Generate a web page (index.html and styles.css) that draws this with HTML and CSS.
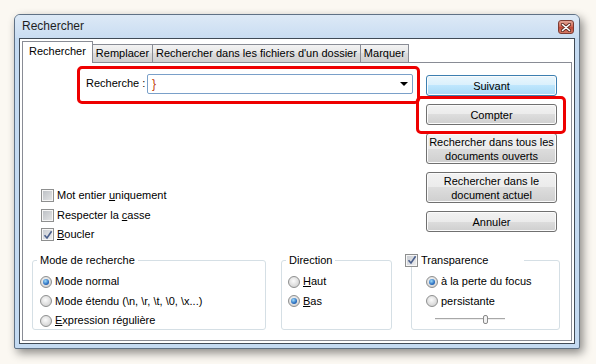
FILE: index.html
```html
<!DOCTYPE html>
<html lang="fr">
<head>
    <meta charset="UTF-8">
    <meta name="viewport" content="width=device-width, initial-scale=1.0">
    <title>Rechercher</title>
    <link rel="stylesheet" href="styles.css">
</head>
<body>
<div class="desk">
    <div class="window">
        <div class="titlebar">
            <span class="title">Rechercher</span>
            <span class="close">
                <svg width="10" height="9" viewBox="0 0 10 9">
                    <path d="M1.5 1.5 L8.5 7.5 M8.5 1.5 L1.5 7.5" stroke="#5a2a22" stroke-width="3.2" stroke-linecap="round"/>
                    <path d="M1.5 1.5 L8.5 7.5 M8.5 1.5 L1.5 7.5" stroke="#fff" stroke-width="1.6" stroke-linecap="round"/>
                </svg>
            </span>
        </div>
        <div class="client">
            <div class="tabs">
                <div class="tab active">Rechercher</div>
                <div class="tab">Remplacer</div>
                <div class="tab">Rechercher dans les fichiers d'un dossier</div>
                <div class="tab">Marquer</div>
            </div>
            <div class="panel">
                <div class="top">
                    <div class="left">
                        <div class="search mark">
                            <label class="search-label">Recherche :</label>
                            <div class="combo">
                                <span class="combo-val">}</span>
                                <span class="combo-arrow"></span>
                            </div>
                        </div>
                        <div class="checks">
                            <div class="opt"><span class="cb"></span><span>Mot entier <u>u</u>niquement</span></div>
                            <div class="opt"><span class="cb"></span><span>Respecter la <u>c</u>asse</span></div>
                            <div class="opt"><span class="cb checked"><svg width="10" height="10" viewBox="0 0 10 10"><path d="M1.5 5.2 L4 8 L8.6 1.2" fill="none" stroke="#4a5f8c" stroke-width="1.6"/></svg></span><span><u>B</u>oucler</span></div>
                        </div>
                    </div>
                    <div class="buttons">
                        <button class="btn default">Suivant</button>
                        <button class="btn mark">Compter</button>
                        <button class="btn tall">Rechercher dans tous les<br>documents ouverts</button>
                        <button class="btn tall">Rechercher dans le<br>document actuel</button>
                        <button class="btn">Annuler</button>
                    </div>
                </div>
                <div class="groups">
                    <fieldset class="group g-mode">
                        <legend>Mode de recherche</legend>
                        <div class="rows">
                            <div class="opt"><span class="rb on"></span><span>Mode normal</span></div>
                            <div class="opt"><span class="rb"></span><span>Mode étendu (\n, \r, \t, \0, \x...)</span></div>
                            <div class="opt"><span class="rb"></span><span><u>E</u>xpression régulière</span></div>
                        </div>
                    </fieldset>
                    <fieldset class="group g-dir">
                        <legend>Direction</legend>
                        <div class="rows">
                            <div class="opt"><span class="rb"></span><span><u>H</u>aut</span></div>
                            <div class="opt"><span class="rb on"></span><span><u>B</u>as</span></div>
                        </div>
                    </fieldset>
                    <fieldset class="group g-trans">
                        <legend><span class="cb checked"><svg width="10" height="10" viewBox="0 0 10 10"><path d="M1.5 5.2 L4 8 L8.6 1.2" fill="none" stroke="#4a5f8c" stroke-width="1.6"/></svg></span>Transparence</legend>
                        <div class="rows">
                            <div class="opt"><span class="rb on"></span><span>à la perte du focus</span></div>
                            <div class="opt"><span class="rb"></span><span>persistante</span></div>
                            <div class="slider">
                                <span class="track"></span>
                                <span class="thumb"></span>
                                <span class="track short"></span>
                            </div>
                        </div>
                    </fieldset>
                </div>
            </div>
        </div>
    </div>
</div>
</body>
</html>
```

FILE: styles.css
```css
html, body {
    margin: 0;
    height: 100%;
}

body {
    background: #fbf8f2;
    font: 11px/1.2 "Liberation Sans", Arial, sans-serif;
    color: #000;
}

.desk {
    padding: 14px 0 0 14px;
}

.window {
    width: 566px;
    height: 335px;
    box-sizing: border-box;
    border: 1px solid #5f7185;
    border-radius: 6px 6px 2px 2px;
    padding: 0 4px 4px;
    background: #c4daf1;
    box-shadow: 3px 4px 10px rgba(0, 0, 0, .45);
    display: flex;
    flex-direction: column;
}

.titlebar {
    height: 23px;
    margin: 0 -4px;
    padding: 0 5px 0 7px;
    display: flex;
    align-items: center;
    justify-content: space-between;
    background: linear-gradient(#dde9f6, #c9ddf2);
    border-radius: 5px 5px 0 0;
}

.title {
    font-size: 12px;
    color: #1e1e1e;
}

.close {
    width: 16px;
    height: 14px;
    box-sizing: border-box;
    border: 1px solid #7d3b33;
    border-radius: 3px;
    background: linear-gradient(#e2a596, #d06a58 45%, #c04a38 55%, #d47a66);
    display: flex;
    align-items: center;
    justify-content: center;
    margin-top: 1px;
}

.client {
    flex: 1;
    border: 1px solid #404b57;
    background: #fff;
    padding: 2px;
    display: flex;
    flex-direction: column;
}

/* onglets */
.tabs {
    display: flex;
    align-items: flex-end;
    height: 21px;
    position: relative;
    z-index: 1;
}

.tab {
    height: 18px;
    box-sizing: border-box;
    padding: 2px 3px 0;
    border: 1px solid #898c95;
    border-bottom: none;
    background: linear-gradient(#f3f3f3, #e6e6e6 50%, #dcdcdc 50%, #cfcfcf);
    margin-left: -1px;
    white-space: nowrap;
}

.tab:first-child {
    margin-left: 0;
}

.tab.active {
    height: 22px;
    margin-bottom: -1px;
    padding: 3px 6px 0;
    background: #fff;
    position: relative;
    z-index: 2;
}

.panel {
    height: 279px;
    box-sizing: border-box;
    border: 1px solid #898c95;
}

.top {
    display: flex;
    height: 190px;
}

.left {
    flex: 1;
}

.mark {
    position: relative;
}

.search {
    display: flex;
    width: fit-content;
    align-items: center;
    margin: 11px 0 0 63px;
}

.search.mark::after {
    content: "";
    position: absolute;
    top: -8px;
    left: -9px;
    right: -7px;
    bottom: -10px;
    border: 3px solid #ee0000;
    border-radius: 5px;
}

.search-label {
    width: 61px;
}

.combo {
    width: 266px;
    height: 20px;
    box-sizing: border-box;
    border: 1px solid #7aa0c9;
    border-radius: 2px;
    display: flex;
    align-items: center;
    justify-content: space-between;
    padding: 0 4px;
}

.combo-val {
    color: #c0400a;
    font-size: 12px;
}

.combo-arrow {
    width: 0;
    height: 0;
    border-left: 4px solid transparent;
    border-right: 4px solid transparent;
    border-top: 4px solid #000;
}

.checks {
    margin: 92px 0 0 18px;
}

.opt {
    display: flex;
    align-items: center;
    height: 19.5px;
    white-space: nowrap;
}

.cb {
    width: 13px;
    height: 13px;
    box-sizing: border-box;
    border: 1px solid #8e8f8f;
    background: linear-gradient(135deg, #b9bdc2, #e6e7e8);
    box-shadow: inset 0 0 0 1px #f6f6f6;
    margin-right: 3px;
    display: inline-flex;
    align-items: center;
    justify-content: center;
    flex: none;
}

.cb.checked {
    background: linear-gradient(135deg, #c6cad0, #f0f0f1);
}

.rb {
    width: 12px;
    height: 12px;
    box-sizing: border-box;
    border: 1px solid #8e8f8f;
    border-radius: 50%;
    background: radial-gradient(circle at 45% 40%, #fbfbfb, #dcdcdc 60%, #c4c4c4);
    margin-right: 3px;
    display: inline-flex;
    align-items: center;
    justify-content: center;
    flex: none;
}

.rb.on::after {
    content: "";
    width: 6px;
    height: 6px;
    border-radius: 50%;
    background: radial-gradient(circle at 40% 35%, #9fdcfb, #2b6fc0 60%, #17468c);
}

/* boutons */
.buttons {
    width: 131px;
    margin: 12px 14px 0 0;
    display: flex;
    flex-direction: column;
    gap: 8px;
}

.btn {
    font: inherit;
    color: #000;
    height: 21px;
    padding: 0;
    border: 1px solid #707070;
    border-radius: 3px;
    background: linear-gradient(#f2f2f2, #ebebeb 50%, #dddddd 50%, #cfcfcf);
    box-shadow: inset 0 0 0 1px #fbfbfb;
    line-height: 14px;
}

.btn.tall {
    height: 31px;
}

.btn.default {
    border-color: #3c7fb1;
    background: linear-gradient(#eaf6fd, #d9f0fc 50%, #bee6fd 50%, #a7d9f5);
}

.btn.mark::after {
    content: "";
    position: absolute;
    top: -9px;
    left: -11px;
    right: -10px;
    bottom: -10px;
    border: 3px solid #ee0000;
    border-radius: 5px;
}

/* cadres */
.groups {
    display: flex;
    padding-left: 9px;
}

.group {
    margin: 0;
    padding: 0;
    min-width: 0;
    height: 77px;
    box-sizing: border-box;
    border: 1px solid #d5dfe5;
    border-radius: 3px;
}

.group legend {
    padding: 0 3px;
    margin-left: 4px;
    line-height: 14px;
}

.g-mode {
    width: 234px;
}

.g-mode .rows {
    padding: 5px 0 0 7px;
}

.g-dir {
    width: 111px;
    margin-left: 15px;
}

.g-dir .rows {
    padding: 5px 0 0 6px;
}

.g-trans {
    width: 149px;
    margin-left: 19px;
}

.g-trans legend {
    margin-left: -7px;
    padding: 0;
    width: 119px;
    display: flex;
    align-items: center;
}

.g-trans .rows {
    padding: 5px 0 0 14px;
}

.slider {
    display: flex;
    align-items: center;
    width: 70px;
    height: 12px;
    margin: 2px 0 0 9px;
}

.track {
    flex: 48;
    height: 0;
    border-top: 1px solid #a8a8a8;
    border-bottom: 1px solid #eee;
}

.track.short {
    flex: 17;
}

.thumb {
    width: 5px;
    height: 9px;
    box-sizing: border-box;
    border: 1px solid #8a8a8a;
    border-radius: 2px;
    background: #f2f2f2;
}
```
